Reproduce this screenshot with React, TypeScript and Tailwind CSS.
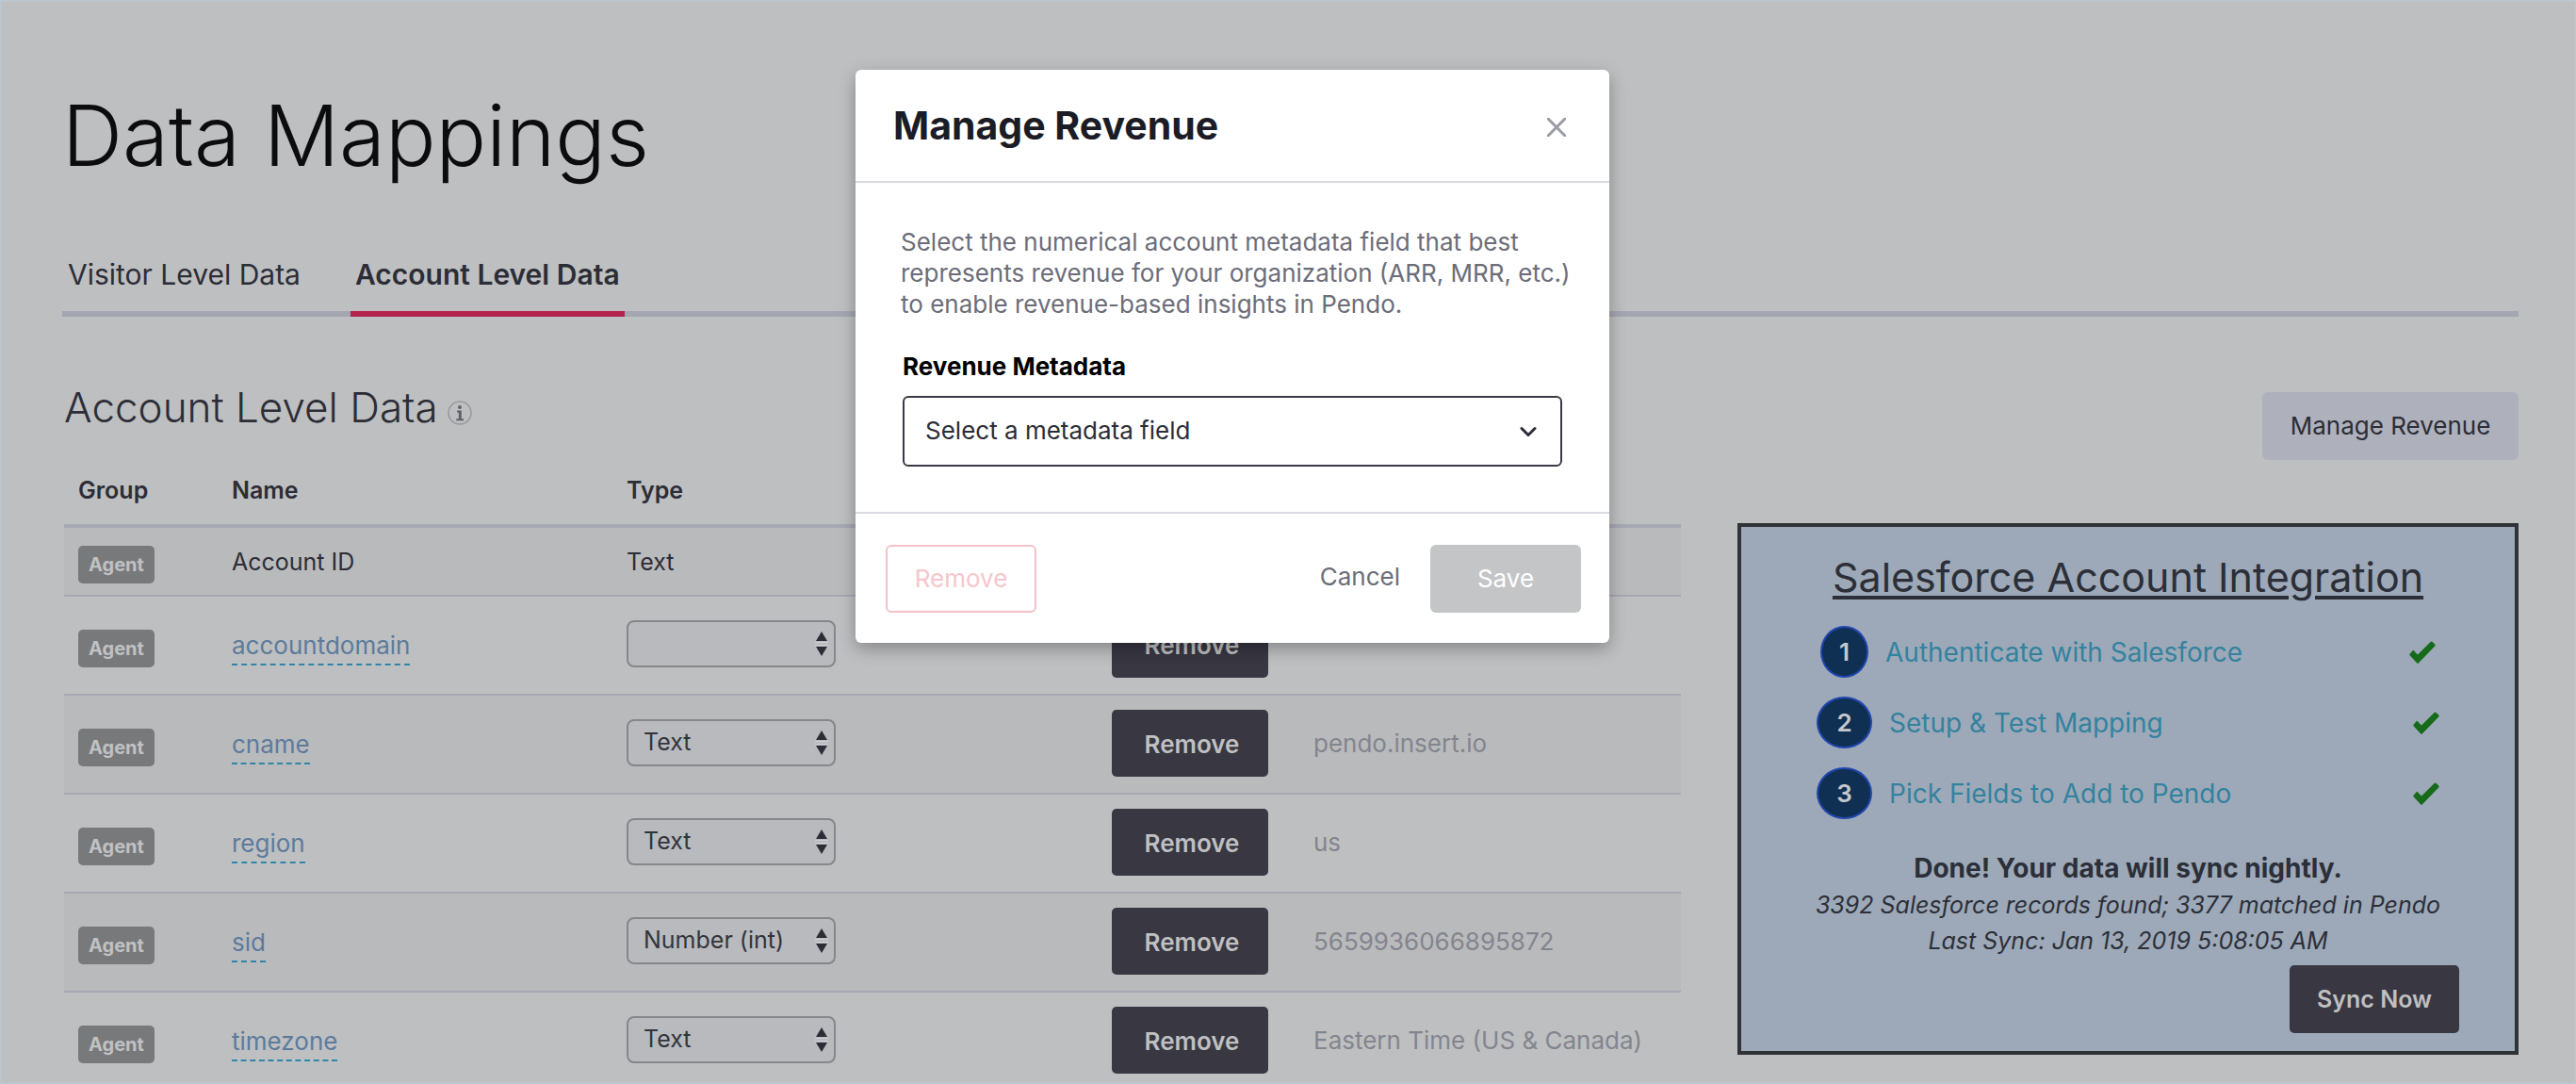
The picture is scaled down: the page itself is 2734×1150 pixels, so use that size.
import React from "react";

type Row = { name: string; type: string; value: string };

const rows: Row[] = [
  { name: "accountdomain", type: "", value: "" },
  { name: "cname", type: "Text", value: "pendo.insert.io" },
  { name: "region", type: "Text", value: "us" },
  { name: "sid", type: "Number (int)", value: "5659936066895872" },
  { name: "timezone", type: "Text", value: "Eastern Time (US & Canada)" },
];

const steps = ["Authenticate with Salesforce", "Setup & Test Mapping", "Pick Fields to Add to Pendo"];

function InfoIcon() {
  return (
    <svg width="26" height="26" viewBox="0 0 26 26" fill="none" aria-hidden="true">
      <circle cx="13" cy="13" r="12" stroke="#98999c" strokeWidth="1.5" />
      <circle cx="13" cy="7" r="2" fill="#606167" />
      <path d="M10 10.500h4.800v8.800H17V21.300H9.300v-2H11.800v-6.800H10z" fill="#606167" />
    </svg>
  );
}

function CheckIcon() {
  return (
    <svg width="28" height="24" viewBox="0 0 28 24" aria-hidden="true">
      <path d="M4.600 10 9 14.400 22.600 1Q23.600 0 24.600 1L27.200 3.600Q28.200 4.600 27.200 5.600L10 23.200Q9 24.200 8 23.200L.8 15.600Q-.2 14.600.8 13.600L3.400 10.400Q4 9.600 4.600 10Z" fill="#166b1a" />
    </svg>
  );
}

function SortArrows() {
  return (
    <svg className="pointer-events-none absolute top-3 right-2" width="14" height="26" viewBox="0 0 14 26" aria-hidden="true">
      <path d="M7 0 13 10H1Z" fill="#2c2d36" />
      <path d="M0 11.500H14M0 14.500H14" stroke="#cfd0d3" strokeWidth="1" />
      <path d="M7 26 13 16H1Z" fill="#2c2d36" />
    </svg>
  );
}

function Badge() {
  return (
    <span className="flex h-10 w-[81px] items-center justify-center rounded-[5px] bg-[#78797b] text-[20px] font-bold text-[#c0c1c3]">
      Agent
    </span>
  );
}

function MappingRow({ row, shaded, last }: { row: Row; shaded: boolean; last: boolean }) {
  return (
    <tr className={shaded ? "bg-[#b9babc]" : ""}>
      <td className="border-t-2 border-[#a6a8b3] pt-[35px] pl-[15px]">
        <Badge />
      </td>
      <td className="border-t-2 border-[#a6a8b3] pt-[34px]">
        <a href="#" className="inline-block border-b-2 border-dashed border-[#2f86a8] pb-1 text-[26px] leading-[30px] text-[#5c7b9c]">
          {row.name}
        </a>
      </td>
      <td className="border-t-2 border-[#a6a8b3] pt-[25px]">
        <span className="relative block w-[222px]">
          <select
            aria-label={`Type of ${row.name}`}
            defaultValue={row.type}
            className="block h-[50px] w-full appearance-none rounded-lg border-2 border-[#86878a] bg-[#b8babe] pr-8 pl-4 text-[25px] text-[#33343c]"
          >
            <option value=""></option>
            <option>Text</option>
            <option>Number (int)</option>
          </select>
          <SortArrows />
        </span>
      </td>
      <td className={`border-t-2 border-[#a6a8b3] pt-[15px] ${last ? "pb-[9px]" : "pb-[17px]"}`}>
        <button className="block h-[71px] w-[166px] rounded-[5px] bg-[#383742] pt-0.5 pl-1 text-[26px] font-semibold text-[#bfc0c2]">
          Remove
        </button>
      </td>
      <td className="border-t-2 border-[#a6a8b3] pt-9 text-[26px] leading-[30px] text-[#83858e]">{row.value}</td>
    </tr>
  );
}

function SalesforcePanel() {
  return (
    <aside className="mt-[50px] w-[829px] shrink-0 border-4 border-[#2f3236] bg-[#9da9b8] pt-[27px] pb-[19px] text-[#2c2f38]">
      <h3 className="text-center text-[43px] leading-[52px] underline decoration-4 underline-offset-4">
        Salesforce Account Integration
      </h3>
      <ol className="mt-[26px] flex flex-col gap-5 px-20">
        {steps.map((step, i) => (
          <li key={step} className={`flex items-center ${i === 0 ? "px-1" : ""}`}>
            <span
              className={`flex h-[55px] items-center justify-center rounded-[50%] border-2 border-[#2146b0] bg-[#0f3052] text-[26px] font-semibold text-[#c3c8cd] ${i === 0 ? "w-[51px]" : "w-[59px]"}`}
            >
              {i + 1}
            </span>
            <a href="#" className="ml-[18px] text-[28px] leading-[34px] text-[#33829f]">
              {step}
            </a>
            <span className="ml-auto">
              <CheckIcon />
            </span>
          </li>
        ))}
      </ol>
      <p className="mt-[35px] text-center text-[28px] leading-[34px] font-bold">Done! Your data will sync nightly.</p>
      <p className="mt-[3px] text-center text-[25px] leading-[38px] italic">
        3392 Salesforce records found; 3377 matched in Pendo
        <br />
        Last Sync: Jan 13, 2019 5:08:05 AM
      </p>
      <div className="mt-[7px] flex justify-end pr-[59px]">
        <button className="h-[72px] w-[180px] rounded-[5px] bg-[#383742] pt-0.5 text-[25px] font-semibold text-[#bfc0c2]">
          Sync Now
        </button>
      </div>
    </aside>
  );
}

function RevenueDialog() {
  return (
    <div className="absolute inset-0 flex items-start justify-center pt-[72px] pr-[118px]">
      <div
        role="dialog"
        aria-modal="true"
        aria-labelledby="dialog-title"
        className="w-[800px] rounded-md bg-white shadow-[0_6px_18px_rgba(0,0,0,0.3)]"
      >
        <header className="flex items-center justify-between border-b-2 border-[#d9dae4] py-[34px] pr-[46px] pl-10">
          <h2 id="dialog-title" className="text-[41px] leading-[50px] font-bold text-[#1b1c25]">
            Manage Revenue
          </h2>
          <button aria-label="Close" className="mt-1">
            <svg width="20" height="20" viewBox="0 0 20 20" fill="none" aria-hidden="true">
              <path d="M1 1 19 19M19 1 1 19" stroke="#999ba6" strokeWidth="3" strokeLinecap="round" />
            </svg>
          </button>
        </header>
        <div className="px-[50px] pt-[46px] pb-12">
          <p className="-mr-8 -ml-0.5 pr-5 text-[26px] leading-[33px] text-[#6c6d78]">
            Select the numerical account metadata field that best represents revenue for your organization (ARR, MRR,
            etc.) to enable revenue-based insights in Pendo.
          </p>
          <label htmlFor="revenue-field" className="mt-[34px] block text-[26px] leading-8 font-bold text-black">
            Revenue Metadata
          </label>
          <div className="relative mt-[15px]">
            <select
              id="revenue-field"
              className="block h-[75px] w-full appearance-none rounded-md border-2 border-[#3a3946] bg-white pb-0.5 pl-[22px] text-[26px] text-[#2c2d36]"
            >
              <option>Select a metadata field</option>
            </select>
            <svg className="pointer-events-none absolute top-8 right-[27px]" width="18" height="13" viewBox="0 0 18 13" fill="none" aria-hidden="true">
              <path d="M2 2.500 9 9.500 16 2.500" stroke="#2c2d36" strokeWidth="3" strokeLinecap="round" strokeLinejoin="round" />
            </svg>
          </div>
        </div>
        <footer className="flex items-center border-t-2 border-[#d9dae4] pt-[33px] pr-[30px] pb-8 pl-8">
          <button className="h-[72px] w-40 rounded-md border-2 border-[#f5c1c7] pb-0.5 text-[26px] text-[#f5c6cc]">Remove</button>
          <button className="mb-1.5 ml-auto text-[26px] text-[#6c6d78]">Cancel</button>
          <button className="ml-8 h-[72px] w-40 rounded-md bg-[#c4c5c7] pb-0.5 text-[26px] text-white">Save</button>
        </footer>
      </div>
    </div>
  );
}

export default function App() {
  return (
    <div className="relative min-h-screen border-2 border-[#bcc6cd] bg-[#bebfc1] font-['Inter',sans-serif] text-[#2c2d36]">
      <main className="pt-[94px] pr-[59px] pl-16">
        <h1 className="text-[89px] leading-[96px] font-light text-[#0c0c0e]">Data Mappings</h1>
        <nav className="mt-[81px] flex gap-[47px] border-b-[6px] border-[#a4a6b1]">
          <button className="px-1.5 pb-[21px] text-[30px] leading-9">Visitor Level Data</button>
          <button className="-mb-1.5 border-b-[6px] border-[#b4234d] px-[5px] pb-[21px] text-[30px] leading-9 font-semibold">
            Account Level Data
          </button>
        </nav>

        <div className="flex justify-between pt-[70px] pl-0.5">
          <section className="mr-[60px] min-w-0 grow">
            <h2 className="flex items-center gap-2.5 text-[44px] leading-[52px] font-light">
              Account Level Data
              <span className="mt-[11px]">
                <InfoIcon />
              </span>
            </h2>
            <table className="mt-[47px] w-full table-fixed border-separate border-spacing-0 text-left text-[25px] [&_td]:align-top">
              <colgroup>
                <col className="w-[178px]" />
                <col className="w-[419px]" />
                <col className="w-[515px]" />
                <col className="w-[214px]" />
                <col />
              </colgroup>
              <thead>
                <tr className="leading-[30px] [&>th]:pb-[21px] [&>th]:font-semibold">
                  <th className="pl-[15px]">Group</th>
                  <th>Name</th>
                  <th>Type</th>
                  <th></th>
                  <th></th>
                </tr>
              </thead>
              <tbody>
                <tr className="bg-[#b9babc] leading-[30px] [&>td]:border-t-4 [&>td]:border-[#a6a8b3]">
                  <td className="pt-[19px] pb-3 pl-[15px]">
                    <Badge />
                  </td>
                  <td className="pt-[21px]">Account ID</td>
                  <td className="pt-[21px]">Text</td>
                  <td></td>
                  <td></td>
                </tr>
                {rows.map((row, i) => (
                  <MappingRow key={row.name} row={row} shaded={i % 2 === 1} last={i === rows.length - 1} />
                ))}
              </tbody>
            </table>
          </section>
          <div className="flex flex-col items-end">
            <button className="mt-2.5 h-[72px] w-[272px] rounded-md bg-[#aeb1bb] pb-0.5 text-[26px]">Manage Revenue</button>
            <div className="mt-[17px]">
              <SalesforcePanel />
            </div>
          </div>
        </div>
      </main>
      <RevenueDialog />
    </div>
  );
}
